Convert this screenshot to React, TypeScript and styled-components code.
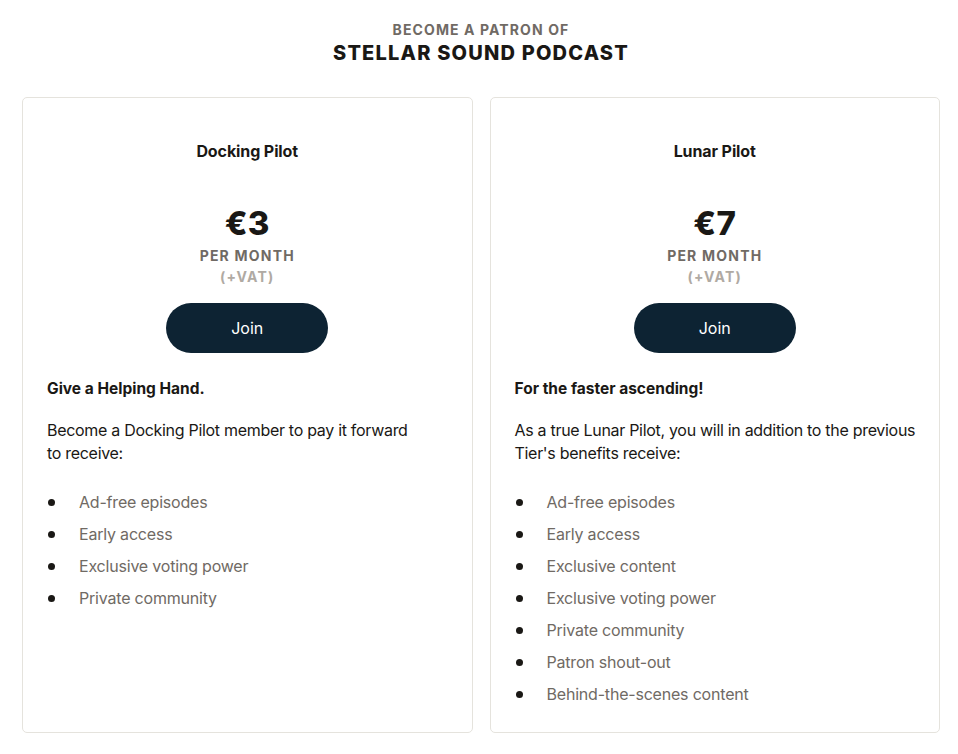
import React from "react";
import styled, { createGlobalStyle } from "styled-components";

const Global = createGlobalStyle`
  html, body { margin: 0; padding: 0; background: #ffffff; }
  body { font-family: Inter, "Noto Sans", "Liberation Sans", sans-serif; color: #1a1815; }
  * { box-sizing: border-box; }
`;

const Page = styled.div`
  padding: 21px 18px 20px 22px;
`;

const Header = styled.header`
  display: flex;
  flex-direction: column;
  align-items: center;
  margin-bottom: 31px;
`;

const Kicker = styled.div`
  font-size: 14px;
  font-weight: 700;
  letter-spacing: 1.1px;
  color: #706a64;
  line-height: 18px;
`;

const Title = styled.h1`
  margin: 1px 0 0;
  font-size: 20px;
  font-weight: 800;
  letter-spacing: 1.2px;
  line-height: 26px;
  color: #1a1815;
`;

const Grid = styled.div`
  display: grid;
  grid-template-columns: 1fr 1fr;
  gap: 17px;
`;

const Card = styled.section`
  border: 1px solid #e5e3dd;
  border-radius: 5px;
  padding: 42px 24px 22px;
  display: flex;
  flex-direction: column;
  min-height: 636px;
`;

const TierName = styled.h2`
  margin: 0;
  text-align: center;
  font-size: 16px;
  font-weight: 700;
  line-height: 22px;
  letter-spacing: -0.1px;
  color: #1a1815;
`;

const PriceBlock = styled.div`
  display: flex;
  flex-direction: column;
  align-items: center;
  margin-top: 41px;
`;

const Price = styled.div`
  font-size: 33px;
  font-weight: 800;
  line-height: 40px;
  margin-bottom: 2px;
  color: #1a1815;
  letter-spacing: 0.3px;
`;

const Period = styled.div<{ $muted?: boolean }>`
  font-size: 14px;
  font-weight: 700;
  letter-spacing: 1.2px;
  line-height: 21px;
  color: ${(p) => (p.$muted ? "#b0aaa3" : "#706a64")};
`;

const JoinButton = styled.button`
  align-self: center;
  margin-top: 16px;
  width: 162px;
  height: 50px;
  border: none;
  border-radius: 25px;
  background: #0d2333;
  color: #ffffff;
  font-family: inherit;
  font-size: 16px;
  font-weight: 400;
  cursor: pointer;
`;

const Tagline = styled.h3`
  margin: 25px 0 0;
  font-size: 15.5px;
  font-weight: 700;
  line-height: 22px;
  color: #1a1815;
`;

const Description = styled.p`
  margin: 19px -8px 0 0;
  font-size: 16px;
  line-height: 23px;
  letter-spacing: -0.3px;
  white-space: pre-line;
  color: #1a1815;
`;

const Benefits = styled.ul`
  list-style: none;
  margin: 21px 0 0;
  padding: 0;
  display: flex;
  flex-direction: column;
`;

const Benefit = styled.li`
  display: flex;
  align-items: center;
  height: 32px;
  font-size: 16px;
  letter-spacing: -0.2px;
  color: #706a64;

  &::before {
    content: "";
    width: 7px;
    height: 7px;
    border-radius: 50%;
    background: #1a1815;
    margin-left: 1px;
    margin-right: 24px;
    flex: none;
  }
`;

type Tier = {
  name: string;
  price: string;
  tagline: string;
  description: string;
  benefits: string[];
};

const tiers: Tier[] = [
  {
    name: "Docking Pilot",
    price: "€3",
    tagline: "Give a Helping Hand.",
    description: "Become a Docking Pilot member to pay it forward\nto receive:",
    benefits: ["Ad-free episodes", "Early access", "Exclusive voting power", "Private community"],
  },
  {
    name: "Lunar Pilot",
    price: "€7",
    tagline: "For the faster ascending!",
    description: "As a true Lunar Pilot, you will in addition to the previous\nTier's benefits receive:",
    benefits: [
      "Ad-free episodes",
      "Early access",
      "Exclusive content",
      "Exclusive voting power",
      "Private community",
      "Patron shout-out",
      "Behind-the-scenes content",
    ],
  },
];

export default function App() {
  return (
    <>
      <Global />
      <Page>
        <Header>
          <Kicker>BECOME A PATRON OF</Kicker>
          <Title>STELLAR SOUND PODCAST</Title>
        </Header>
        <Grid>
          {tiers.map((t) => (
            <Card key={t.name}>
              <TierName>{t.name}</TierName>
              <PriceBlock>
                <Price>{t.price}</Price>
                <Period>PER MONTH</Period>
                <Period $muted>(+VAT)</Period>
              </PriceBlock>
              <JoinButton>Join</JoinButton>
              <Tagline>{t.tagline}</Tagline>
              <Description>{t.description}</Description>
              <Benefits>
                {t.benefits.map((b) => (
                  <Benefit key={b}>{b}</Benefit>
                ))}
              </Benefits>
            </Card>
          ))}
        </Grid>
      </Page>
    </>
  );
}
